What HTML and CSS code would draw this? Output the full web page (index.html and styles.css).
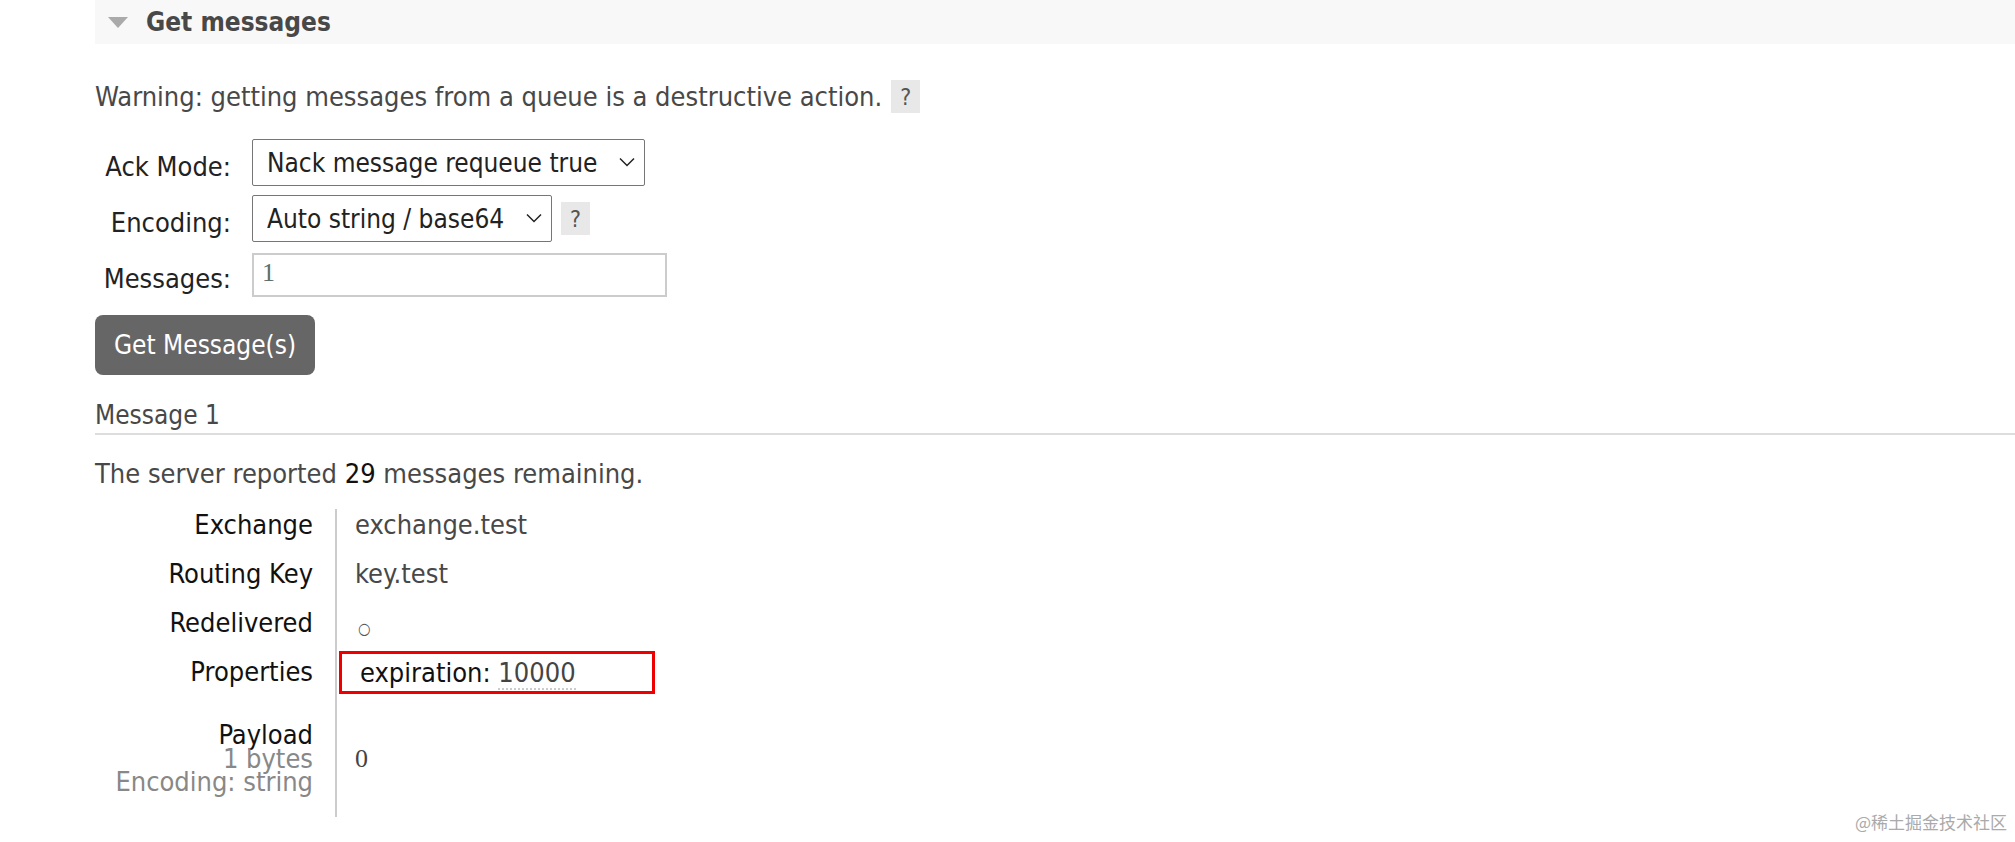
FILE: index.html
```html
<!DOCTYPE html>
<html lang="en">
<head>
<meta charset="UTF-8">
<title>Queue - Get messages</title>
<link rel="stylesheet" href="styles.css">
</head>
<body>
<div class="section-head">
<span class="arrow"></span>
<h2>Get messages</h2>
</div>
<div class="section-body">
<p class="warning">Warning: getting messages from a queue is a destructive action. <span class="help">?</span></p>
<form class="get-form">
<label for="ackmode">Ack Mode:</label>
<div class="field">
<div class="select-wrap">
<select id="ackmode" class="select">
<option>Nack message requeue true</option>
</select>
<svg class="chevron" width="16" height="10" viewBox="0 0 16 10"><path d="M1 1.5 L8 8.5 L15 1.5" fill="none" stroke="#222" stroke-width="1.5"/></svg>
</div>
</div>
<label for="encoding">Encoding:</label>
<div class="field">
<div class="select-wrap">
<select id="encoding" class="select">
<option>Auto string / base64</option>
</select>
<svg class="chevron" width="16" height="10" viewBox="0 0 16 10"><path d="M1 1.5 L8 8.5 L15 1.5" fill="none" stroke="#222" stroke-width="1.5"/></svg>
</div>
<span class="help">?</span>
</div>
<label for="count">Messages:</label>
<div class="field">
<input type="text" id="count" class="count" value="1">
</div>
</form>
<button class="get-button" type="button">Get Message(s)</button>
<h3 class="msg-title">Message 1</h3>
<p class="remaining">The server reported <b>29</b> messages remaining.</p>
<div class="facts">
<div class="fact-label">Exchange</div>
<div class="fact-value">exchange.test</div>
<div class="fact-label">Routing Key</div>
<div class="fact-value">key.test</div>
<div class="fact-label">Redelivered</div>
<div class="fact-value"><span class="bool">○</span></div>
<div class="fact-label">Properties</div>
<div class="fact-value"><div class="props"><span class="prop-key">expiration:</span> <abbr class="prop-val" title="10000">10000</abbr></div></div>
<div class="fact-label payload">Payload<br><span class="sub">1 bytes</span><br><span class="sub">Encoding: string</span></div>
<div class="fact-value payload-value"><pre class="payload-body">0</pre></div>
</div>
</div>
<div class="watermark">@稀土掘金技术社区</div>
</body>
</html>
```

FILE: styles.css
```css
body { margin: 0; font-family: "DejaVu Sans Condensed", "DejaVu Sans", sans-serif; font-size: 27px; color: #484848; background: white; }
.section-head { margin-left: 95px; height: 44px; background-color: #f8f8f8; display: flex; align-items: center; }
.section-head .arrow { width: 0; height: 0; margin-left: 13px; margin-right: 18px; border-left: 10px solid transparent; border-right: 10px solid transparent; border-top: 11px solid #aaa; }
.section-head h2 { margin: 0; font-size: 26px; font-weight: bold; color: #484848; }
.section-body { padding-left: 95px; }
.warning { margin: 36px 0 0; display: flex; align-items: center; }
.help { display: inline-flex; align-items: center; justify-content: center; width: 29px; height: 33px; margin-left: 9px; background-color: #e8e8e8; color: #555; font-size: 23px; }
.get-form { display: grid; grid-template-columns: 136px auto; column-gap: 21px; row-gap: 9px; margin-top: 26px; align-items: center; }
.get-form label { text-align: right; color: #222; font-size: 27px; padding-top: 8px; }
.field { display: flex; align-items: center; }
.select-wrap { position: relative; }
.select { appearance: none; -webkit-appearance: none; font-family: inherit; font-size: 26px; color: #222; background: white; border: 1px solid #767676; border-radius: 2px; height: 47px; padding: 0 46px 0 14px; margin: 0; }
.chevron { position: absolute; right: 10px; top: 18px; pointer-events: none; }
.field .help { margin-left: 9px; }
.count { width: 415px; height: 44px; box-sizing: border-box; border: 2px solid #ccc; padding: 0 8px 4px; font-family: "Liberation Serif", serif; font-size: 26px; color: #5a7068; margin-top: 2px; }
.get-button { display: block; margin-top: 18px; width: 220px; height: 60px; background-color: #666; color: white; border: none; border-radius: 8px; font-family: inherit; font-size: 26px; padding: 0; }
.msg-title { margin: 25px 0 0; font-weight: normal; font-size: 26px; line-height: 30px; padding-bottom: 3px; border-bottom: 2px solid #ddd; }
.remaining { margin: 23px 0 0; line-height: 31px; }
.remaining b { font-weight: normal; color: #111; }
.facts { display: grid; grid-template-columns: 240px auto; margin-top: 20px; }
.fact-label { text-align: right; color: #111; padding-right: 22px; height: 49px; line-height: 31px; }
.fact-value { border-left: 2px solid #ccc; padding-left: 18px; height: 49px; line-height: 31px; }
.bool { font-size: 16px; color: #555; position: relative; top: 2px; left: 3px; }
.props { border: 3px solid #e00; width: 316px; height: 43px; box-sizing: border-box; margin: -5px 0 0 -16px; padding-left: 18px; line-height: 37px; }
.prop-key { color: #111; }
.prop-val { text-decoration: none; border-bottom: 2px dotted #ccc; color: #444; }
.payload { height: auto; padding-top: 18px; padding-bottom: 23px; line-height: 23.5px; }
.payload .sub { color: #888; }
.payload-value { height: auto; }
.payload-body { margin: 39px 0 0; font-family: "Liberation Serif", serif; font-size: 26px; line-height: 30px; color: #444; }
.watermark { position: absolute; right: 8px; bottom: 8px; font-family: "Noto Sans CJK SC", sans-serif; font-size: 17px; color: #aaa; }
```
